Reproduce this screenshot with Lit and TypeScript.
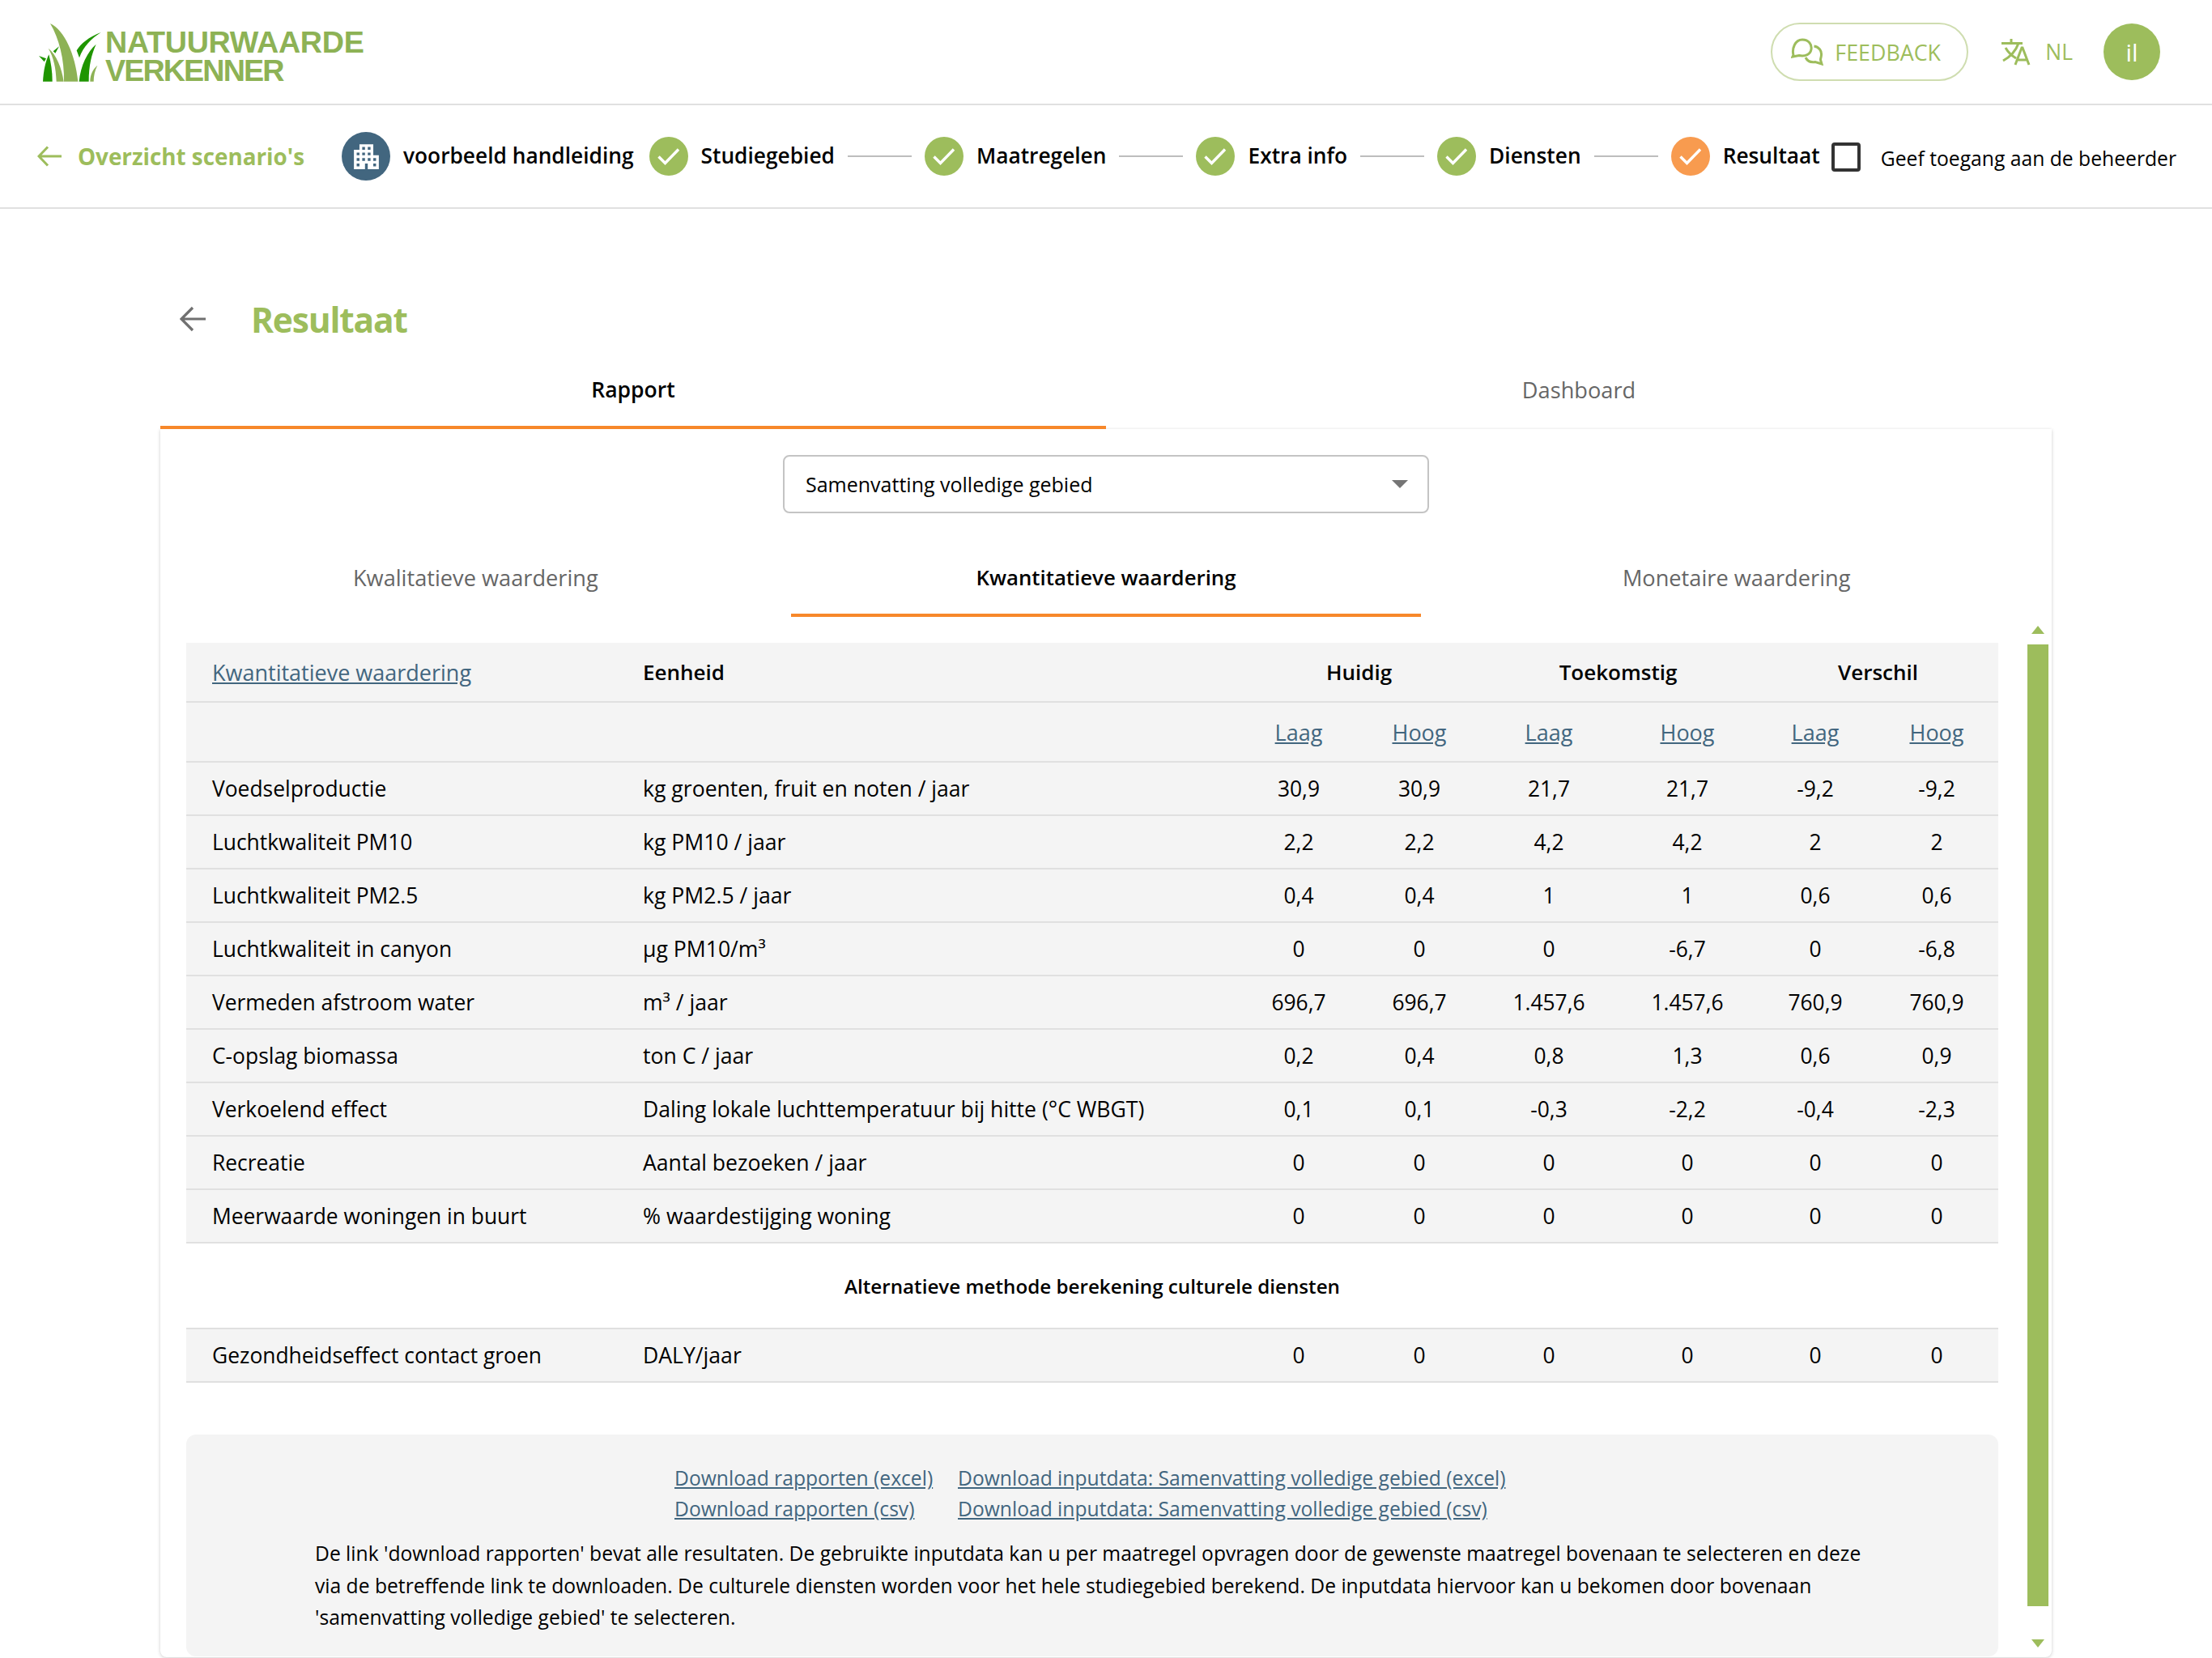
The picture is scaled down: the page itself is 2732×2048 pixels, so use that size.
import { LitElement, css, html, svg } from "lit";
import { customElement } from "lit/decorators.js";

const check = svg`<path d="M11.500 24.500l8 8L36 15.500" fill="none" stroke="#fff" stroke-width="3.400"/>`;

const rows = [
  ["Voedselproductie", "kg groenten, fruit en noten / jaar", "30,9", "30,9", "21,7", "21,7", "-9,2", "-9,2"],
  ["Luchtkwaliteit PM10", "kg PM10 / jaar", "2,2", "2,2", "4,2", "4,2", "2", "2"],
  ["Luchtkwaliteit PM2.5", "kg PM2.5 / jaar", "0,4", "0,4", "1", "1", "0,6", "0,6"],
  ["Luchtkwaliteit in canyon", "µg PM10/m³", "0", "0", "0", "-6,7", "0", "-6,8"],
  ["Vermeden afstroom water", "m³ / jaar", "696,7", "696,7", "1.457,6", "1.457,6", "760,9", "760,9"],
  ["C-opslag biomassa", "ton C / jaar", "0,2", "0,4", "0,8", "1,3", "0,6", "0,9"],
  ["Verkoelend effect", "Daling lokale luchttemperatuur bij hitte (°C WBGT)", "0,1", "0,1", "-0,3", "-2,2", "-0,4", "-2,3"],
  ["Recreatie", "Aantal bezoeken / jaar", "0", "0", "0", "0", "0", "0"],
  ["Meerwaarde woningen in buurt", "% waardestijging woning", "0", "0", "0", "0", "0", "0"],
];
const extraRow = ["Gezondheidseffect contact groen", "DALY/jaar", "0", "0", "0", "0", "0", "0"];
const colWidths = [532, 766, 152, 146, 174, 168, 148, 152];

@customElement("app-root")
export class AppRoot extends LitElement {
  static styles = css`
    :host {
      display: block;
      width: 2732px;
      height: 2048px;
      overflow: hidden;
      background: #fff;
      color: #000;
      font-family: "Open Sans", "Liberation Sans", sans-serif;
      font-size: 26.400px;
    }
    a {
      color: #42667f;
      text-decoration: underline;
    }

    .header {
      display: flex;
      align-items: center;
      height: 128px;
      padding: 0 64px 0 48px;
      border-bottom: 2px solid #e0e0e0;
    }
    .logo {
      display: flex;
      align-items: flex-end;
      gap: 5px;
      margin-top: 2px;
    }
    .logo-text {
      font-family: "Liberation Sans", sans-serif;
      font-weight: 700;
      font-size: 37.700px;
      line-height: 35px;
      color: #8db255;
      margin-bottom: -4px;
    }
    .logo-top {
      display: block;
      letter-spacing: -0.300px;
    }
    .logo-bottom {
      display: block;
      letter-spacing: -1.900px;
    }
    .header-right {
      display: flex;
      align-items: center;
      margin-left: auto;
    }
    .feedback {
      display: flex;
      align-items: center;
      gap: 14px;
      box-sizing: border-box;
      width: 244px;
      height: 72px;
      padding-left: 23px;
      border: 2px solid #cfddb0;
      border-radius: 36px;
      color: #9dbd5c;
      font-size: 26.800px;
      font-weight: 500;
    }
    .lang {
      display: flex;
      align-items: center;
      gap: 17px;
      margin-left: 40px;
      color: #9dbd5c;
      font-weight: 500;
    }
    .avatar {
      display: flex;
      align-items: center;
      justify-content: center;
      width: 70px;
      height: 70px;
      margin-left: 38px;
      border-radius: 50%;
      background: #9dbd5c;
      color: #fff;
      font-size: 30px;
    }

    .steps {
      display: flex;
      align-items: center;
      height: 126px;
      padding-left: 46px;
      border-bottom: 2px solid #e0e0e0;
    }
    .back {
      display: flex;
      align-items: center;
      gap: 20px;
      margin-right: 46px;
      color: #9dbd5c;
      font-size: 27.800px;
      font-weight: 700;
    }
    .scenario {
      display: flex;
      align-items: center;
      justify-content: center;
      width: 60px;
      height: 60px;
      margin-right: 16px;
      border-radius: 50%;
      background: #42667f;
    }
    .step-name {
      margin-bottom: 2px;
      font-size: 26.300px;
      font-weight: 600;
      white-space: nowrap;
    }
    .scenario-name {
      margin-right: 19px;
    }
    .dot {
      flex: none;
      width: 48px;
      height: 48px;
      margin-right: 16px;
      border-radius: 50%;
      background: #9dbd5c;
    }
    .dot.current {
      background: #f89b4f;
    }
    .line {
      width: 79px;
      height: 2px;
      margin: 0 16px;
      background: #bdbdbd;
    }
    .checkbox {
      box-sizing: border-box;
      width: 36px;
      height: 36px;
      margin: 2px 25px 0 14px;
      border: 4px solid #333;
      border-radius: 4px;
    }
    .access {
      font-size: 24.700px;
      margin-top: 4px;
      white-space: nowrap;
    }

    .page {
      padding: 106px 198px 0;
    }
    .title-row {
      display: flex;
      align-items: center;
      gap: 56px;
      height: 60px;
      padding-left: 24px;
    }
    .title {
      margin: 0;
      color: #9dbd5c;
      font-size: 42.500px;
      font-weight: 700;
      letter-spacing: -1.200px;
    }
    .main-tabs {
      display: grid;
      grid-template-columns: 1fr 1fr;
      margin-top: 10px;
    }
    .tab {
      display: flex;
      align-items: center;
      justify-content: center;
      box-sizing: border-box;
      height: 96px;
      padding-top: 2px;
      color: #666;
      font-size: 27.200px;
      font-weight: 500;
      border-bottom: 4px solid transparent;
    }
    .tab.active {
      color: #000;
      font-size: 26.500px;
      font-weight: 600;
      border-bottom-color: #f7882a;
    }
    .card {
      box-sizing: border-box;
      height: 1517px;
      padding-top: 32px;
      border-radius: 0 0 8px 8px;
      background: #fff;
      box-shadow: 0 1px 4px rgba(0, 0, 0, 0.2);
    }
    .select {
      display: flex;
      align-items: center;
      justify-content: space-between;
      box-sizing: border-box;
      width: 798px;
      height: 72px;
      margin: 0 auto;
      padding: 0 24px 0 26px;
      border: 2px solid #c4c4c4;
      border-radius: 8px;
      font-size: 25px;
    }
    .caret {
      width: 0;
      height: 0;
      border-left: 10px solid transparent;
      border-right: 10px solid transparent;
      border-top: 10px solid #757575;
    }
    .sub-tabs {
      display: grid;
      grid-template-columns: repeat(3, 1fr);
      margin-top: 32px;
    }
    .sub-tabs .tab.active {
      font-size: 25.800px;
    }
    .body {
      display: flex;
      margin-top: 8px;
      padding-left: 32px;
    }
    .content {
      width: 2238px;
      padding-top: 24px;
    }
    table {
      width: 2238px;
      table-layout: fixed;
      border-collapse: separate;
      border-spacing: 0;
    }
    td,
    th {
      box-sizing: border-box;
      height: 66px;
      padding: 0;
      border-bottom: 2px solid #e0e0e0;
      background: #f4f4f4;
      font-weight: 400;
      text-align: center;
      white-space: nowrap;
    }
    th {
      height: 74px;
      font-weight: 600;
      font-size: 26px;
    }
    th a {
      font-size: 27px;
      font-weight: 500;
    }
    th.group {
      padding-left: 3px;
    }
    .left {
      text-align: left;
    }
    .first {
      padding-left: 32px;
    }
    .unit {
      padding-left: 32px;
    }
    td.unit {
      font-size: 26.600px;
    }
    td.extra {
      height: 106px;
      background: #fff;
      font-size: 24.200px;
      font-weight: 600;
    }
    .bar {
      display: flex;
      flex-direction: column;
      align-items: center;
      width: 26px;
      margin-left: 36px;
    }
    .up,
    .down {
      width: 0;
      height: 0;
      border-left: 8px solid transparent;
      border-right: 8px solid transparent;
    }
    .up {
      margin: 3px 0 13px;
      border-bottom: 10px solid #9dbd5c;
    }
    .down {
      margin-top: 41px;
      border-top: 10px solid #9dbd5c;
    }
    .thumb {
      width: 26px;
      height: 1188px;
      background: #9dbd5c;
    }
    .footer {
      box-sizing: border-box;
      height: 274px;
      margin-top: 64px;
      padding: 35px 0 0 159px;
      border-radius: 12px;
      background: #f4f4f4;
      font-size: 24.650px;
    }
    .links {
      display: grid;
      grid-template-columns: 350px auto;
      justify-content: start;
      margin-left: 444px;
      line-height: 38px;
      white-space: nowrap;
    }
    .note {
      margin: 16px 0 0;
      line-height: 39.500px;
      white-space: nowrap;
    }
  `;

  renderLogo() {
    return html`<div class="logo">
      <svg width="77" height="72" viewBox="55 55 231 216">
        <path fill="#1f9500" d="M92 170C78 200 72 235 70 270H105C105 235 100 200 92 170Z" />
        <path fill="#1f9500" d="M130 140L108 158L116 165ZM55 175L75 197L82 185Z" />
        <path fill="#8db255" d="M90 147C120 170 140 220 147 270H120C118 220 110 180 90 147Z" />
        <path fill="#8db255" d="M97 55C150 80 190 170 200 270H148C150 190 130 110 97 55Z" />
        <path fill="#1f9500" d="M285 88C240 105 210 130 195 155L205 182C220 140 250 110 285 88Z" />
        <path fill="#1f9500" d="M267 132C235 160 210 210 204 270H240C240 210 250 170 267 132Z" />
        <path fill="#8db255" d="M272 210C255 225 245 245 245 270H258C258 250 262 230 272 210Z" />
      </svg>
      <div class="logo-text">
        <span class="logo-top">NATUURWAARDE</span>
        <span class="logo-bottom">VERKENNER</span>
      </div>
    </div>`;
  }

  renderHeader() {
    return html`<div class="header">
      ${this.renderLogo()}
      <div class="header-right">
        <div class="feedback">
          <svg width="40" height="34" viewBox="0 0 40 34" fill="none" stroke="#9dbd5c" stroke-width="3">
            <path d="M3 21C1 13 5 2 14 2C22 2 26 8 25 14C24 20 18 23 10 21.500L2 23Z" />
            <path d="M28.500 10C35 11 38 16 37.500 21C37.300 24 36.500 25 36.500 27L38 32L30 29.500C24 30.500 20 28 18 24" />
          </svg>
          FEEDBACK
        </div>
        <div class="lang">
          <svg width="38" height="34" viewBox="0 0 38 34" fill="none" stroke="#9dbd5c" stroke-width="3">
            <path d="M1 6.500H27M13 1V6.500M22 6.500C19 15 12 23 3 28M6 12C10 19 14 22 19 25M18 33L26 12H27L35 33M20.500 27H32.500" />
          </svg>
          NL
        </div>
        <div class="avatar">il</div>
      </div>
    </div>`;
  }

  renderSteps() {
    const steps = ["Studiegebied", "Maatregelen", "Extra info", "Diensten", "Resultaat"];
    return html`<div class="steps">
      <div class="back">
        <svg width="30" height="26" viewBox="0 0 30 26" fill="none" stroke="#9dbd5c" stroke-width="3">
          <path d="M30 13H3M13 1.500L2 13L13 24.500" />
        </svg>
        Overzicht scenario's
      </div>
      <div class="scenario">
        <svg width="41" height="41" viewBox="0 0 24 24" fill="#fff">
          <path d="M17 11V3H7v4H3v14h8v-4h2v4h8V11h-4zM7 19H5v-2h2v2zm0-4H5v-2h2v2zm0-4H5V9h2v2zm4 4H9v-2h2v2zm0-4H9V9h2v2zm0-4H9V5h2v2zm4 8h-2v-2h2v2zm0-4h-2V9h2v2zm0-4h-2V5h2v2zm4 12h-2v-2h2v2zm0-4h-2v-2h2v2z" />
        </svg>
      </div>
      <span class="step-name scenario-name">voorbeeld handleiding</span>
      ${steps.map(
        (s, i) => html`
          <svg class="dot ${i == 4 ? "current" : ""}" viewBox="0 0 48 48">${check}</svg>
          <span class="step-name">${s}</span>
          ${i < 4 ? html`<div class="line"></div>` : ""}
        `
      )}
      <div class="checkbox"></div>
      <span class="access">Geef toegang aan de beheerder</span>
    </div>`;
  }

  renderRow(r: string[]) {
    return html`<tr>
      <td class="left first">${r[0]}</td>
      <td class="left unit">${r[1]}</td>
      ${r.slice(2).map((v) => html`<td>${v}</td>`)}
    </tr>`;
  }

  renderTable() {
    return html`<table>
      <colgroup>
        ${colWidths.map((w) => html`<col style="width:${w}px" />`)}
      </colgroup>
      <tr>
        <th class="left first"><a>Kwantitatieve waardering</a></th>
        <th class="left unit">Eenheid</th>
        <th class="group" colspan="2">Huidig</th>
        <th class="group" colspan="2">Toekomstig</th>
        <th class="group" colspan="2">Verschil</th>
      </tr>
      <tr>
        <th></th>
        <th></th>
        ${["Laag", "Hoog", "Laag", "Hoog", "Laag", "Hoog"].map((h) => html`<th><a>${h}</a></th>`)}
      </tr>
      ${rows.map((r) => this.renderRow(r))}
      <tr><td class="extra" colspan="8">Alternatieve methode berekening culturele diensten</td></tr>
      ${this.renderRow(extraRow)}
    </table>`;
  }

  render() {
    return html`
      ${this.renderHeader()} ${this.renderSteps()}
      <div class="page">
        <div class="title-row">
          <svg width="32" height="32" viewBox="0 0 32 32" fill="none" stroke="#707070" stroke-width="3.200">
            <path d="M32 16H3M16 2L2 16L16 30" />
          </svg>
          <h1 class="title">Resultaat</h1>
        </div>
        <div class="main-tabs">
          <div class="tab active">Rapport</div>
          <div class="tab">Dashboard</div>
        </div>
        <div class="card">
          <div class="select">Samenvatting volledige gebied<span class="caret"></span></div>
          <div class="sub-tabs">
            <div class="tab">Kwalitatieve waardering</div>
            <div class="tab active">Kwantitatieve waardering</div>
            <div class="tab">Monetaire waardering</div>
          </div>
          <div class="body">
            <div class="content">
              ${this.renderTable()}
              <div class="footer">
                <div class="links">
                  <a>Download rapporten (excel)</a>
                  <a>Download inputdata: Samenvatting volledige gebied (excel)</a>
                  <a>Download rapporten (csv)</a>
                  <a>Download inputdata: Samenvatting volledige gebied (csv)</a>
                </div>
                <p class="note">
                  De link 'download rapporten' bevat alle resultaten. De gebruikte inputdata kan u per maatregel opvragen door de gewenste maatregel bovenaan te selecteren en deze<br />
                  via de betreffende link te downloaden. De culturele diensten worden voor het hele studiegebied berekend. De inputdata hiervoor kan u bekomen door bovenaan<br />
                  'samenvatting volledige gebied' te selecteren.
                </p>
              </div>
            </div>
            <div class="bar">
              <div class="up"></div>
              <div class="thumb"></div>
              <div class="down"></div>
            </div>
          </div>
        </div>
      </div>
    `;
  }
}
